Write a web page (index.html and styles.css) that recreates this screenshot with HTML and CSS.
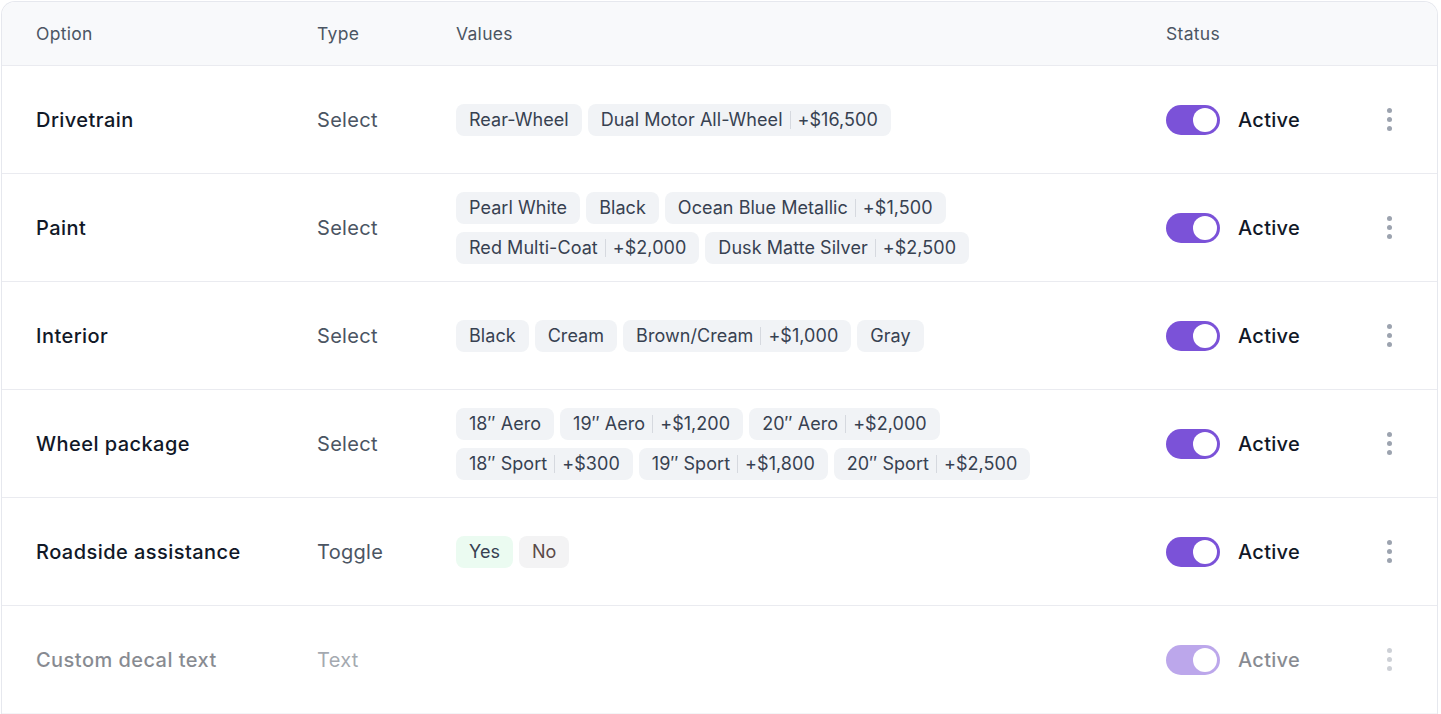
FILE: index.html
```html
<!DOCTYPE html>
<html lang="en">
<head>
  <meta charset="UTF-8">
  <meta name="viewport" content="width=device-width, initial-scale=1.0">
  <title>Options</title>
  <link rel="stylesheet" href="styles.css">
</head>
<body>
  <div class="card">
    <div class="row head">
      <div>Option</div>
      <div>Type</div>
      <div>Values</div>
      <div>Status</div>
      <div></div>
    </div>

    <div class="row">
      <div class="name">Drivetrain</div>
      <div class="type">Select</div>
      <div class="values">
        <div class="line">
          <span class="chip">Rear-Wheel</span>
          <span class="chip">Dual Motor All-Wheel<i class="sep"></i>+$16,500</span>
        </div>
      </div>
      <div class="status"><span class="toggle"></span>Active</div>
      <div class="more"><span></span><span></span><span></span></div>
    </div>

    <div class="row">
      <div class="name">Paint</div>
      <div class="type">Select</div>
      <div class="values">
        <div class="line">
          <span class="chip">Pearl White</span>
          <span class="chip">Black</span>
          <span class="chip">Ocean Blue Metallic<i class="sep"></i>+$1,500</span>
        </div>
        <div class="line">
          <span class="chip">Red Multi-Coat<i class="sep"></i>+$2,000</span>
          <span class="chip">Dusk Matte Silver<i class="sep"></i>+$2,500</span>
        </div>
      </div>
      <div class="status"><span class="toggle"></span>Active</div>
      <div class="more"><span></span><span></span><span></span></div>
    </div>

    <div class="row">
      <div class="name">Interior</div>
      <div class="type">Select</div>
      <div class="values">
        <div class="line">
          <span class="chip">Black</span>
          <span class="chip">Cream</span>
          <span class="chip">Brown/Cream<i class="sep"></i>+$1,000</span>
          <span class="chip">Gray</span>
        </div>
      </div>
      <div class="status"><span class="toggle"></span>Active</div>
      <div class="more"><span></span><span></span><span></span></div>
    </div>

    <div class="row">
      <div class="name">Wheel package</div>
      <div class="type">Select</div>
      <div class="values">
        <div class="line">
          <span class="chip">18″ Aero</span>
          <span class="chip">19″ Aero<i class="sep"></i>+$1,200</span>
          <span class="chip">20″ Aero<i class="sep"></i>+$2,000</span>
        </div>
        <div class="line">
          <span class="chip">18″ Sport<i class="sep"></i>+$300</span>
          <span class="chip">19″ Sport<i class="sep"></i>+$1,800</span>
          <span class="chip">20″ Sport<i class="sep"></i>+$2,500</span>
        </div>
      </div>
      <div class="status"><span class="toggle"></span>Active</div>
      <div class="more"><span></span><span></span><span></span></div>
    </div>

    <div class="row">
      <div class="name">Roadside assistance</div>
      <div class="type">Toggle</div>
      <div class="values">
        <div class="line">
          <span class="chip yes">Yes</span>
          <span class="chip no">No</span>
        </div>
      </div>
      <div class="status"><span class="toggle"></span>Active</div>
      <div class="more"><span></span><span></span><span></span></div>
    </div>

    <div class="row faded">
      <div class="name">Custom decal text</div>
      <div class="type">Text</div>
      <div class="values"></div>
      <div class="status"><span class="toggle"></span>Active</div>
      <div class="more"><span></span><span></span><span></span></div>
    </div>
  </div>
</body>
</html>
```

FILE: styles.css
```css
body {
  margin: 0;
  font-family: Inter, "Noto Sans", sans-serif;
  background-color: #fff;
  color: #111827;
}

.card {
  margin: 1px 3px 0 1px;
  border: 1px solid #e6e8ee;
  border-bottom: none;
  border-radius: 14px 14px 0 0;
  overflow: hidden;
}

.row {
  display: grid;
  grid-template-columns: 281px 139px 1fr 211px 24px;
  align-items: center;
  height: 107px;
  padding: 0 36px 0 34px;
  border-bottom: 1px solid #eaebf0;
}

.row.head {
  height: 63px;
  background-color: #f8f9fb;
  font-size: 17.5px;
  letter-spacing: 0.3px;
  color: #4b5563;
}

.name {
  font-size: 20px;
  font-weight: 500;
  letter-spacing: 0.45px;
}

.type {
  font-size: 20px;
  letter-spacing: 0.3px;
  color: #4b5563;
}

.values {
  display: flex;
  flex-direction: column;
  gap: 8px;
}

.line {
  display: flex;
  gap: 6px;
}

.chip {
  display: inline-flex;
  align-items: center;
  height: 32px;
  padding: 0 13px;
  border-radius: 8px;
  background-color: #f1f3f6;
  font-size: 18px;
  letter-spacing: 0.05px;
  color: #374151;
}

.sep {
  width: 1px;
  height: 18px;
  margin: 0 7px;
  background-color: #d6d9df;
}

.chip.yes {
  background-color: #ebfbf1;
}

.chip.no {
  background-color: #f3f3f4;
  color: #5b4a48;
}

.status {
  display: flex;
  align-items: center;
  gap: 18px;
  font-size: 20px;
  font-weight: 500;
  letter-spacing: 0.3px;
}

.toggle {
  position: relative;
  width: 54px;
  height: 30px;
  border-radius: 15px;
  background-color: #7b52d8;
}

.toggle::after {
  content: "";
  position: absolute;
  top: 3px;
  right: 3px;
  width: 24px;
  height: 24px;
  border-radius: 50%;
  background-color: #fff;
}

.more {
  display: flex;
  flex-direction: column;
  align-items: center;
  gap: 4px;
}

.more span {
  width: 5px;
  height: 5px;
  border-radius: 50%;
  background-color: #9ca3af;
}

.faded {
  opacity: 0.5;
}
```
